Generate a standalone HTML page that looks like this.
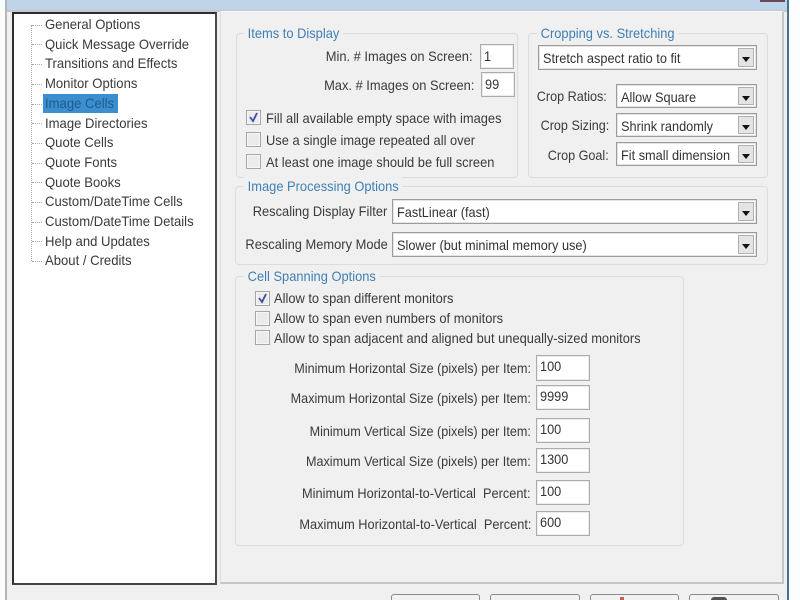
<!DOCTYPE html>
<html><head><meta charset="utf-8"><style>
html,body{margin:0;padding:0;width:800px;height:600px;overflow:hidden;background:#fff}
#r{position:relative;width:800px;height:600px;overflow:hidden;background:#f0f0f0;font-family:"Liberation Sans",sans-serif;font-size:14px;color:#3a3a3a;filter:blur(.35px)}
#r div{position:absolute;box-sizing:border-box}
.t{white-space:nowrap;line-height:18px;height:18px;transform:scaleX(.92);transform-origin:left}
.tree{transform:scaleX(.935)}
.r{text-align:right;transform-origin:right}
.n{transform:scaleX(.90)}
.m{transform:scaleX(.912)}
.g{border:1px solid #dcdcdc;border-radius:4px}
.l{color:#3f7fb5;background:#f0f0f0;padding:0 4px;white-space:nowrap;line-height:18px;height:18px;transform:scaleX(.92);transform-origin:left}
.i{background:#fff;border:1px solid #acacac;box-shadow:inset 0 0 0 1px #ececec;line-height:18px;padding:1px 0 0 3px;color:#333}
.c{background:#fff;border:1px solid #9c9c9c;box-shadow:inset 0 0 0 1px #e4e4e4;line-height:18px;padding:3px 0 0 4px;color:#333;white-space:nowrap}
.s{display:inline-block;transform:scaleX(.91);transform-origin:left}
.b{right:2px;top:2px;bottom:2px;width:16px;background:#e4e4e4;border:1px solid #b0b0b0}
.b:after{content:"";position:absolute;left:3px;top:8px;border:4px solid transparent;border-top:5px solid #111;border-bottom:0}
.k{width:15px;height:15px;background:#ebebeb;border:1px solid #a6a6a6;box-shadow:inset 0 0 0 1px #f6f6f6}
.h{left:32px;width:10px;height:0;border-top:1px dotted #a8a8a8}
.p{top:594px;height:12px;background:#f2f2f2;border:1px solid #8a8a8a;border-radius:3px}
</style></head><body><div id="r">

<div style="left:0;top:0;width:5px;height:600px;background:#fafcfd"></div>
<div style="left:7px;top:0;width:781px;height:11px;background:#bdd4e9"></div>
<div style="left:5px;top:0;width:2px;height:600px;background:#b4b6b8"></div>
<div style="left:787px;top:0;width:2px;height:600px;background:#41738f"></div>
<div style="left:789px;top:0;width:11px;height:600px;background:#fbfdfe"></div>
<div style="left:760px;top:0;width:25px;height:2px;background:#6d4a55"></div>
<div style="left:7px;top:10px;width:780px;height:2px;background:#c9c6cc"></div>

<div style="left:12px;top:12px;width:205px;height:573px;background:#fff;border:2px solid #2e2e2e;border-right-color:#4a4a4a;border-bottom-color:#444"></div>
<div style="left:31px;top:25px;width:0;height:236px;border-left:1px dotted #a8a8a8"></div>
<div class="h" style="top:25px"></div><div class="h" style="top:44px"></div><div class="h" style="top:64px"></div><div class="h" style="top:84px"></div><div class="h" style="top:104px"></div><div class="h" style="top:123px"></div><div class="h" style="top:143px"></div><div class="h" style="top:163px"></div><div class="h" style="top:182px"></div><div class="h" style="top:202px"></div><div class="h" style="top:222px"></div><div class="h" style="top:241px"></div><div class="h" style="top:261px"></div>
<div style="left:43px;top:94px;width:75px;height:19px;background:#3c8fcf"></div>
<div class="t tree" style="left:45px;top:15px">General Options</div>
<div class="t tree" style="left:45px;top:35px">Quick Message Override</div>
<div class="t tree" style="left:45px;top:54px">Transitions and Effects</div>
<div class="t tree" style="left:45px;top:74px">Monitor Options</div>
<div class="t tree" style="left:45px;top:94px;color:#1f5a8c">Image Cells</div>
<div class="t tree" style="left:45px;top:114px">Image Directories</div>
<div class="t tree" style="left:45px;top:133px">Quote Cells</div>
<div class="t tree" style="left:45px;top:153px">Quote Fonts</div>
<div class="t tree" style="left:45px;top:173px">Quote Books</div>
<div class="t tree" style="left:45px;top:192px">Custom/DateTime Cells</div>
<div class="t tree" style="left:45px;top:212px">Custom/DateTime Details</div>
<div class="t tree" style="left:45px;top:232px">Help and Updates</div>
<div class="t tree" style="left:45px;top:251px">About / Credits</div>

<div style="left:220px;top:11px;width:564px;height:573px;border:1px solid #c6c6c6;border-left-color:#dcdcdc;border-top-color:#f8f8f8;border-right-width:2px;border-bottom-width:2px;background:#f0f0f0"></div>

<div class="g" style="left:236px;top:33px;width:282px;height:145px"></div>
<div class="l" style="left:244px;top:24px">Items to Display</div>
<div class="t r" style="right:327px;top:47px">Min. # Images on Screen:</div>
<div class="i" style="left:480px;top:44px;width:34px;height:25px;padding-top:2px"><span class="s">1</span></div>
<div class="t r" style="right:326px;top:76px">Max. # Images on Screen:</div>
<div class="i" style="left:481px;top:72px;width:34px;height:25px;padding-top:2px"><span class="s">99</span></div>
<div class="k" style="left:246px;top:110px"></div>
<svg style="position:absolute;left:246px;top:110px" width="15" height="15"><path d="M4 7l3 4 4-8" fill="none" stroke="#3c4f9c" stroke-width="1.8"/></svg>
<div class="t" style="left:266px;top:109px">Fill all available empty space with images</div>
<div class="k" style="left:246px;top:132px"></div>
<div class="t" style="left:266px;top:131px">Use a single image repeated all over</div>
<div class="k" style="left:246px;top:154px"></div>
<div class="t" style="left:266px;top:153px">At least one image should be full screen</div>

<div class="g" style="left:528px;top:33px;width:240px;height:145px"></div>
<div class="l" style="left:537px;top:24px">Cropping vs. Stretching</div>
<div class="c" style="left:538px;top:45px;width:219px;height:25px"><span class="s">Stretch aspect ratio to fit</span><div class="b"></div></div>
<div class="t r n" style="right:193px;top:87px">Crop Ratios:</div>
<div class="c" style="left:616px;top:84px;width:141px;height:24px"><span class="s">Allow Square</span><div class="b"></div></div>
<div class="t r n" style="right:191px;top:116px">Crop Sizing:</div>
<div class="c" style="left:616px;top:113px;width:141px;height:24px"><span class="s">Shrink randomly</span><div class="b"></div></div>
<div class="t r n" style="right:191px;top:146px">Crop Goal:</div>
<div class="c" style="left:616px;top:142px;width:141px;height:24px"><span class="s">Fit small dimension</span><div class="b"></div></div>

<div class="g" style="left:235px;top:186px;width:533px;height:79px"></div>
<div class="l" style="left:244px;top:177px">Image Processing Options</div>
<div class="t r" style="right:413px;top:202px">Rescaling Display Filter</div>
<div class="c" style="left:392px;top:199px;width:365px;height:25px"><span class="s">FastLinear (fast)</span><div class="b"></div></div>
<div class="t r" style="right:412px;top:235px">Rescaling Memory Mode</div>
<div class="c" style="left:392px;top:232px;width:365px;height:25px"><span class="s">Slower (but minimal memory use)</span><div class="b"></div></div>

<div class="g" style="left:235px;top:276px;width:449px;height:270px"></div>
<div class="l" style="left:244px;top:267px">Cell Spanning Options</div>
<div class="k" style="left:255px;top:291px"></div>
<svg style="position:absolute;left:255px;top:291px" width="15" height="15"><path d="M4 7l3 4 4-8" fill="none" stroke="#3c4f9c" stroke-width="1.8"/></svg>
<div class="t" style="left:274px;top:289px">Allow to span different monitors</div>
<div class="k" style="left:255px;top:311px"></div>
<div class="t" style="left:274px;top:309px">Allow to span even numbers of monitors</div>
<div class="k" style="left:255px;top:330px"></div>
<div class="t" style="left:274px;top:329px">Allow to span adjacent and aligned but unequally-sized monitors</div>

<div class="t r n" style="right:269px;top:359px">Minimum Horizontal Size (pixels) per Item:</div>
<div class="i" style="left:536px;top:355px;width:54px;height:26px"><span class="s">100</span></div>
<div class="t r n" style="right:269px;top:389px">Maximum Horizontal Size (pixels) per Item:</div>
<div class="i" style="left:536px;top:385px;width:54px;height:25px"><span class="s">9999</span></div>
<div class="t r n" style="right:269px;top:422px">Minimum Vertical Size (pixels) per Item:</div>
<div class="i" style="left:536px;top:418px;width:54px;height:25px"><span class="s">100</span></div>
<div class="t r n" style="right:269px;top:452px">Maximum Vertical Size (pixels) per Item:</div>
<div class="i" style="left:536px;top:448px;width:54px;height:25px"><span class="s">1300</span></div>
<div class="t r m" style="right:269px;top:484px">Minimum Horizontal-to-Vertical&nbsp; Percent:</div>
<div class="i" style="left:536px;top:480px;width:54px;height:25px"><span class="s">100</span></div>
<div class="t r m" style="right:269px;top:515px">Maximum Horizontal-to-Vertical&nbsp; Percent:</div>
<div class="i" style="left:536px;top:511px;width:54px;height:25px"><span class="s">600</span></div>

<div class="p" style="left:391px;width:89px"></div>
<div class="p" style="left:490px;width:90px"></div>
<div class="p" style="left:590px;width:89px"></div>
<div style="left:620px;top:597px;width:4px;height:3px;background:#c8605a"></div>
<div class="p" style="left:689px;width:90px"></div>
<div style="left:711px;top:597px;width:16px;height:3px;background:#555;border-radius:3px 3px 0 0"></div>
</div></body></html>
